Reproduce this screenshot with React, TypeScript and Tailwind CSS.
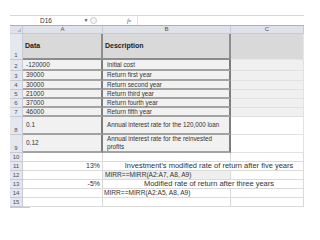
type Row = {
  n: number;
  h: string;
  a?: string;
  b?: string;
  kind: 'head' | 'data' | 'tall' | 'blank' | 'pct' | 'formula';
};

const rows: Row[] = [
  { n: 1, h: 'h-[26px]', a: 'Data', b: 'Description', kind: 'head' },
  { n: 2, h: 'h-[11px]', a: '-120000', b: 'Initial cost', kind: 'data' },
  { n: 3, h: 'h-[10px]', a: '39000', b: 'Return first year', kind: 'data' },
  { n: 4, h: 'h-[9px]', a: '30000', b: 'Return second year', kind: 'data' },
  { n: 5, h: 'h-[9px]', a: '21000', b: 'Return third year', kind: 'data' },
  { n: 6, h: 'h-[9px]', a: '37000', b: 'Return fourth year', kind: 'data' },
  { n: 7, h: 'h-[9px]', a: '46000', b: 'Return fifth year', kind: 'data' },
  { n: 8, h: 'h-[18px]', a: '0.1', b: 'Annual interest rate for the 120,000 loan', kind: 'tall' },
  { n: 9, h: 'h-[18px]', a: '0.12', b: 'Annual interest rate for the reinvested profits', kind: 'tall' },
  { n: 10, h: 'h-[9px]', kind: 'blank' },
  { n: 11, h: 'h-[9px]', a: '13%', b: "Investment's modified rate of return after five years", kind: 'pct' },
  { n: 12, h: 'h-[9px]', b: 'MIRR==MIRR(A2:A7, A8, A9)', kind: 'formula' },
  { n: 13, h: 'h-[9px]', a: '-5%', b: 'Modified rate of return after three years', kind: 'pct' },
  { n: 14, h: 'h-[9px]', b: 'MIRR==MIRR(A2:A5, A8, A9)', kind: 'formula' },
  { n: 15, h: 'h-[9px]', kind: 'blank' },
];

function SheetRow({ row }: { row: Row }) {
  const num = (
    <div className="w-[13px] shrink-0 bg-[#e4e8ee] border-r border-b border-[#c5cbd4] flex items-end justify-center text-[6px] leading-[8px] text-[#3f4f6b]">
      {row.n}
    </div>
  );

  if (row.kind === 'head') {
    return (
      <div className={`flex ${row.h}`}>
        {num}
        <div className="w-[80px] shrink-0 bg-[#d9d9d9] border-b-2 border-r-2 border-[#8c8c8c] flex items-center pl-[2px] text-[7px] font-bold text-[#222]">
          {row.a}
        </div>
        <div className="w-[128px] shrink-0 bg-[#d9d9d9] border-b-2 border-r-2 border-[#8c8c8c] flex items-center pl-[2px] text-[7px] font-bold text-[#222]">
          {row.b}
        </div>
        <div className="w-[73px] shrink-0 bg-[#d9d9d9] border-b border-r border-[#e6e6e6]" />
      </div>
    );
  }

  if (row.kind === 'data' || row.kind === 'tall') {
    return (
      <div className={`flex ${row.h}`}>
        {num}
        <div className="w-[80px] shrink-0 bg-[#f1f1f1] border-b-2 border-r-2 border-[#a3a3a3] border-r-[#7d7d7d] flex items-center pl-[3px] text-[6.5px] leading-[8px] text-[#333]">
          {row.a}
        </div>
        <div className="w-[128px] shrink-0 bg-[#f1f1f1] border-b-2 border-r-2 border-[#a3a3a3] border-r-[#7d7d7d] flex items-center pl-[4px] pr-[14px] text-[6.3px] leading-[8px] text-[#333]">
          <span className={row.n === 8 ? 'whitespace-nowrap' : ''}>{row.b}</span>
        </div>
        <div
          className={
            row.kind === 'data'
              ? 'w-[73px] shrink-0 bg-[#f0f0f0] border-b border-r border-[#e2e2e2]'
              : 'w-[73px] shrink-0 bg-white border-b border-r border-[#e2e2e2]'
          }
        />
      </div>
    );
  }

  if (row.kind === 'pct') {
    return (
      <div className={`flex ${row.h}`}>
        {num}
        <div className="w-[80px] shrink-0 border-b border-r border-[#dadada] flex items-center justify-end pr-[2px] text-[7px] leading-[8px] text-[#333]">
          {row.a}
        </div>
        <div className="w-[201px] shrink-0 border-b border-r border-[#dadada] flex items-center justify-center pl-[12px] text-[7.5px] leading-[8px] text-[#333] whitespace-nowrap">
          {row.b}
        </div>
      </div>
    );
  }

  if (row.kind === 'formula') {
    return (
      <div className={`flex ${row.h}`}>
        {num}
        <div className="w-[80px] shrink-0 border-b border-r border-[#dadada]" />
        <div
          className={
            row.n === 12
              ? 'w-[128px] shrink-0 bg-[#efefef] border-b border-r border-[#dadada] flex items-center pl-[2px] text-[6.6px] leading-[8px] text-[#333] whitespace-nowrap'
              : 'w-[128px] shrink-0 border-b border-r border-[#dadada] flex items-center pl-[1px] text-[6.6px] leading-[8px] text-[#333] whitespace-nowrap'
          }
        >
          {row.b}
        </div>
        <div className="w-[73px] shrink-0 border-b border-r border-[#dadada]" />
      </div>
    );
  }

  return (
    <div className={`flex ${row.h}`}>
      {num}
      <div className="w-[80px] shrink-0 border-b border-r border-[#dadada]" />
      <div className="w-[128px] shrink-0 border-b border-r border-[#dadada]" />
      <div className="w-[73px] shrink-0 border-b border-r border-[#dadada]" />
    </div>
  );
}

export default function App() {
  return (
    <div className="w-[320px] h-[240px] bg-white pt-[15px] pl-[10px] font-['Liberation_Sans',Arial,sans-serif]">
      <div className="w-[294px]">
        {/* formula bar */}
        <div className="flex h-[10px] border-t border-[#d3d7dd]">
          <div className="w-[72px] flex items-center justify-center text-[6.5px] text-[#333]">D16</div>
          <div className="w-[8px] flex items-center justify-center text-[5px] text-[#555]">▼</div>
          <div className="w-[10px] flex items-center">
            <div className="w-[7px] h-[7px] rounded-full border border-[#c8ccd2] bg-[#f3f4f6]" />
          </div>
          <div className="w-[27px]" />
          <div className="w-[10px] flex items-center text-[6.5px] italic font-['Liberation_Serif',serif] text-[#555]">
            f<span className="text-[5px]">x</span>
          </div>
          <div className="flex-1 border-l border-[#dde0e4]" />
        </div>

        {/* column headers */}
        <div className="flex h-[9px] bg-[#dfe3e9] border-t border-[#a9b0ba]">
          <div className="w-[13px] relative border-r border-b border-[#c5cbd4]">
            <div className="absolute right-[1px] bottom-[1px] w-0 h-0 border-l-[4px] border-l-transparent border-b-[4px] border-b-[#b5bcc6]" />
          </div>
          <div className="w-[80px] border-r border-b border-[#c5cbd4] flex items-center justify-center text-[6px] text-[#4a4f57]">A</div>
          <div className="w-[128px] border-r border-b border-[#c5cbd4] flex items-center justify-center text-[6px] text-[#4a4f57]">B</div>
          <div className="w-[73px] border-r border-b border-[#c5cbd4] flex items-center justify-center text-[6px] text-[#4a4f57]">C</div>
        </div>

        {rows.map((r) => (
          <SheetRow key={r.n} row={r} />
        ))}
        <div className="w-[20px] h-[1px] bg-[#f2c46b]" />
      </div>
    </div>
  );
}
